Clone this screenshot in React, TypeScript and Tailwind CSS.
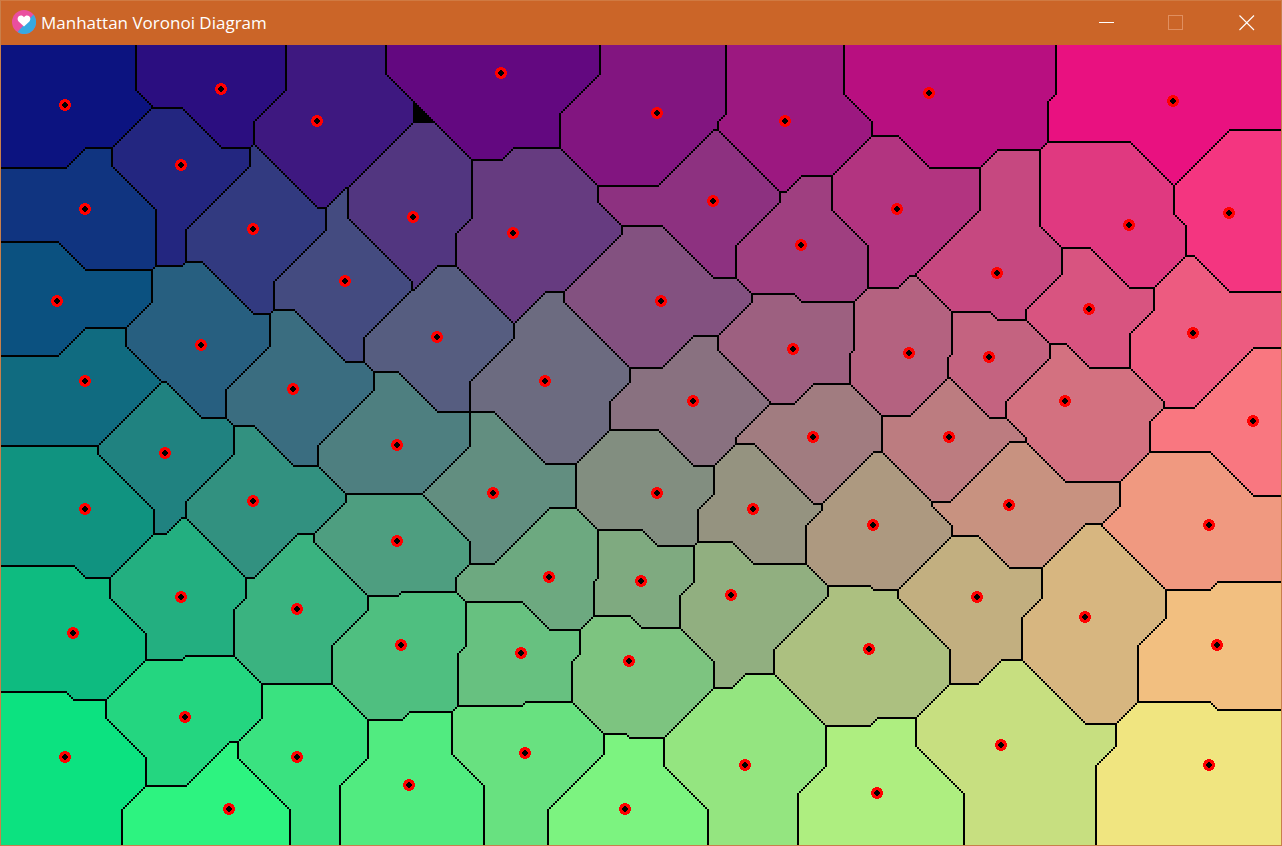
import React, { useMemo } from 'react';

// site positions in the 640x400 surface that gets blown up 2x
const SITES: [number, number][] = [
  [32, 30], [110, 22], [158, 38], [250, 14], [328, 34], [392, 38], [464, 24], [586, 28],
  [90, 60], [42, 82], [126, 92], [206, 86], [256, 94], [356, 78], [448, 82], [400, 100], [564, 90], [614, 84],
  [28, 128], [172, 118], [330, 128], [498, 114], [544, 132], [596, 144],
  [100, 150], [218, 146], [396, 152], [454, 154], [494, 156],
  [42, 168], [146, 172], [272, 168], [346, 178], [532, 178], [626, 188],
  [82, 204], [198, 200], [406, 196], [474, 196],
  [42, 232], [126, 228], [246, 224], [328, 224], [376, 232], [436, 240], [504, 230], [604, 240],
  [198, 248], [90, 276], [148, 282], [274, 266], [320, 268], [365, 275], [488, 276], [542, 286],
  [36, 294], [200, 300], [260, 304], [314, 308], [434, 302], [608, 300],
  [92, 336], [32, 356], [148, 356], [204, 370], [262, 354], [372, 360], [500, 350], [604, 360],
  [114, 382], [312, 382], [438, 374],
];

const W = 640;
const H = 400;

function buildRuns() {
  const cells: string[] = SITES.map(() => '');
  let ties = '';
  for (let y = 0; y < H; y++) {
    let runStart = 0;
    let runOwner = -2;
    for (let x = 0; x <= W; x++) {
      let owner = -2;
      if (x < W) {
        let best = 1e9;
        let second = 1e9;
        let idx = -1;
        for (let i = 0; i < SITES.length; i++) {
          const d = Math.abs(SITES[i][0] - x) + Math.abs(SITES[i][1] - y);
          if (d < best) {
            second = best;
            best = d;
            idx = i;
          } else if (d < second) {
            second = d;
          }
        }
        owner = best === second ? -1 : idx;
      }
      if (owner !== runOwner) {
        if (runOwner !== -2) {
          const seg = `M${runStart} ${y}h${x - runStart}v1h${runStart - x}z`;
          if (runOwner === -1) ties += seg;
          else cells[runOwner] += seg;
        }
        runStart = x;
        runOwner = owner;
      }
    }
  }
  return { cells, ties };
}

function Diagram() {
  const { cells, ties } = useMemo(buildRuns, []);
  return (
    <svg width={1280} height={800} viewBox="0 0 640 400" shapeRendering="crispEdges" className="block">
      <rect width={W} height={H} fill="#000" />
      {cells.map((d, i) => (
        <path
          key={i}
          d={d}
          fill={`rgb(${Math.floor((SITES[i][0] / W) * 255)},${Math.floor((SITES[i][1] / H) * 255)},128)`}
        />
      ))}
      <path d={ties} fill="#000" />
      {SITES.map(([x, y], i) => (
        <g key={i} transform={`translate(${x} ${y})`}>
          <circle r={3} fill="#ff0000" />
          {/* small stepped diamond in the middle */}
          <path
            d="M-.5-1.5h1v.5h.5v.5h.5v1h-.5v.5h-.5v.5h-1v-.5h-.5v-.5h-.5v-1h.5v-.5h.5z"
            fill="#000"
          />
        </g>
      ))}
    </svg>
  );
}

function AppIcon() {
  return (
    <svg width={24} height={24} viewBox="0 0 24 24">
      <circle cx={12} cy={12} r={12} fill="#ea4f9f" />
      <path d="M21.5 4.6A12 12 0 0 1 5.5 22.1Z" fill="#38a9e1" />
      <path d="M12 16.5 6.6 11.6C4.6 9.2 6 5.6 8.9 5.6c1.3 0 2.4.6 3.1 1.7.7-1.1 1.8-1.7 3.1-1.7 2.9 0 4.3 3.6 2.3 6Z" fill="#fff" />
    </svg>
  );
}

export default function App() {
  return (
    <div className="w-[1282px] h-[846px] border border-[#c97f4b] border-t-[#d07a42] bg-[#cb6528] flex flex-col overflow-hidden">
      <div className="h-[44px] shrink-0 flex items-center text-white">
        <div className="ml-[11px] -mt-[2px]">
          <AppIcon />
        </div>
        <span className="ml-[5px] text-[17px] font-['Open_Sans',sans-serif] whitespace-nowrap">
          Manhattan Voronoi Diagram
        </span>
        <div className="ml-auto flex items-center -mt-[1px]">
          <svg width={16} height={16} viewBox="0 0 16 16" className="mr-[53px]" shapeRendering="crispEdges">
            <rect x={0} y={7} width={15} height={1} fill="#fff" />
          </svg>
          <svg width={16} height={16} viewBox="0 0 16 16" className="mr-[55px]" shapeRendering="crispEdges">
            <rect x={0.5} y={0.5} width={14} height={14} fill="none" stroke="#e08f60" strokeWidth={1} />
          </svg>
          <svg width={16} height={16} viewBox="0 0 16 16" className="mr-[26px]">
            <path d="M0.5 0.5 15 15M15 0.5 0.5 15" stroke="#fff" strokeWidth={1.1} fill="none" />
          </svg>
        </div>
      </div>
      <Diagram />
    </div>
  );
}
